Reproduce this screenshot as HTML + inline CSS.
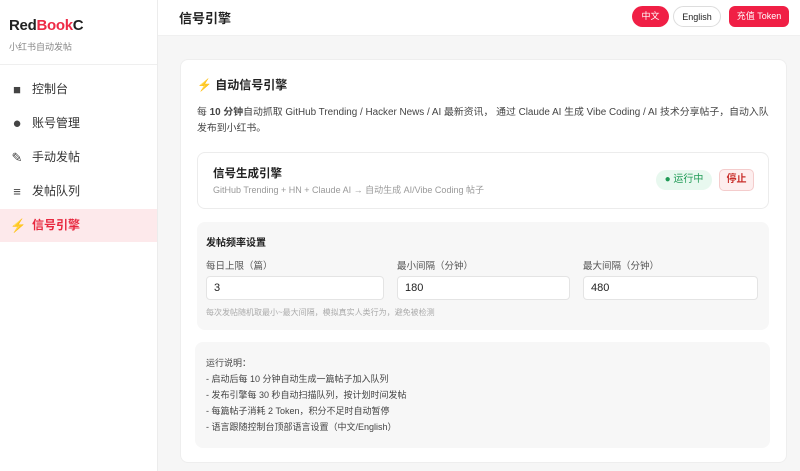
<!DOCTYPE html>
<html><head><meta charset="utf-8"><style>
*{box-sizing:border-box;margin:0;padding:0}
body{width:800px;height:471px;overflow:hidden;font-family:"Liberation Sans","Noto Sans CJK SC",sans-serif;background:#f6f6f6;color:#222;position:relative}
.side{position:absolute;left:0;top:0;width:158px;height:471px;background:#fff;border-right:1px solid #ececec}
.logo{position:absolute;left:9px;top:17px;font-size:15px;font-weight:bold;letter-spacing:-0.3px}
.logo span{color:#ee2a46}
.sub{position:absolute;left:9px;top:40px;font-size:9px;color:#888}
.div{position:absolute;left:0;top:64px;width:157px;height:1px;background:#efefef}
.nav{position:absolute;left:0;width:157px;height:33px;font-size:12px;color:#333;line-height:33px;padding-left:32px}
.nav i{position:absolute;left:10px;top:0;font-style:normal;width:14px;text-align:center;font-size:13px;color:#444}
.nav.act{background:#fde9eb;color:#e8283f;font-weight:bold}
.head{position:absolute;left:158px;top:0;right:0;height:36px;background:#fff;border-bottom:1px solid #f0f0f0}
.head h1{position:absolute;left:21px;top:8px;font-size:13px;font-weight:bold}
.btn{position:absolute;top:6px;height:21px;border-radius:11px;font-size:9px;line-height:21px;text-align:center}
.card{position:absolute;left:180px;top:59px;width:607px;height:404px;background:#fff;border:1px solid #eee;border-radius:8px}
.t{position:absolute;font-size:11px}
.box{position:absolute;border-radius:8px}
.inp{position:absolute;top:276px;height:24px;background:#fff;border:1px solid #e4e4e4;border-radius:4px;font-size:11px;line-height:22px;padding-left:7px}
</style></head><body>
<div class="side">
<div class="logo">Red<span>Book</span>C</div>
<div class="sub">小红书自动发帖</div>
<div class="div"></div>
<div class="nav" style="top:73px"><i>■</i>控制台</div>
<div class="nav" style="top:107px"><i style="font-size:15px">●</i>账号管理</div>
<div class="nav" style="top:141px"><i>✎</i>手动发帖</div>
<div class="nav" style="top:175px"><i>≡</i>发帖队列</div>
<div class="nav act" style="top:209px"><i style="color:#f0c23a">⚡</i>信号引擎</div>
</div>
<div class="head"><h1>信号引擎</h1>
<div class="btn" style="left:474px;width:37px;background:#f01f45;color:#fff">中文</div>
<div class="btn" style="left:515px;width:48px;background:#fff;border:1px solid #ddd;color:#222">English</div>
<div class="btn" style="left:571px;width:60px;background:#f01f45;color:#fff;border-radius:6px">充值 Token</div>
</div>
<div class="card"></div>
<div class="t" style="left:197px;top:76px;font-size:12px;font-weight:bold"><span style="color:#f0c23a">⚡</span> 自动信号引擎</div>
<div class="t" style="left:197px;top:105px;white-space:nowrap;line-height:16px;color:#444;font-size:9.9px">每 <b>10 分钟</b>自动抓取 GitHub Trending / Hacker News / AI 最新资讯， 通过 Claude AI 生成 Vibe Coding / AI 技术分享帖子，自动入队<br>发布到小红书。</div>
<div class="box" style="left:197px;top:152px;width:572px;height:57px;border:1px solid #ececec;background:#fff"></div>
<div class="t" style="left:213px;top:165px;font-weight:bold;font-size:11.5px">信号生成引擎</div>
<div class="t" style="left:213px;top:183px;font-size:9px;color:#999">GitHub Trending + HN + Claude AI → 自动生成 AI/Vibe Coding 帖子</div>
<div class="box" style="left:656px;top:170px;width:56px;height:20px;background:#e8f8ef;border-radius:10px;color:#1f9a55;font-size:10px;line-height:20px;text-align:center">● 运行中</div>
<div class="box" style="left:719px;top:169px;width:35px;height:22px;background:#fdeeee;border:1px solid #f4cccc;border-radius:5px;color:#c9302c;font-size:10px;line-height:20px;text-align:center;font-weight:bold">停止</div>
<div class="box" style="left:197px;top:222px;width:572px;height:108px;background:#f7f7f7"></div>
<div class="t" style="left:206px;top:234px;font-weight:bold;font-size:10px">发帖频率设置</div>
<div class="t" style="left:206px;top:258px;font-size:9.5px;color:#555">每日上限（篇）</div>
<div class="t" style="left:397px;top:258px;font-size:9.5px;color:#555">最小间隔（分钟）</div>
<div class="t" style="left:583px;top:258px;font-size:9.5px;color:#555">最大间隔（分钟）</div>
<div class="inp" style="left:206px;width:178px">3</div>
<div class="inp" style="left:397px;width:173px">180</div>
<div class="inp" style="left:583px;width:175px">480</div>
<div class="t" style="left:206px;top:307px;font-size:8px;color:#aaa">每次发帖随机取最小~最大间隔，模拟真实人类行为，避免被检测</div>
<div class="box" style="left:195px;top:342px;width:575px;height:106px;background:#f7f7f7"></div>
<div class="t" style="left:206px;top:355px;font-size:9px;color:#444;line-height:16px">运行说明：<br>- 启动后每 10 分钟自动生成一篇帖子加入队列<br>- 发布引擎每 30 秒自动扫描队列，按计划时间发帖<br>- 每篇帖子消耗 2 Token，积分不足时自动暂停<br>- 语言跟随控制台顶部语言设置（中文/English）</div>
</body></html>
